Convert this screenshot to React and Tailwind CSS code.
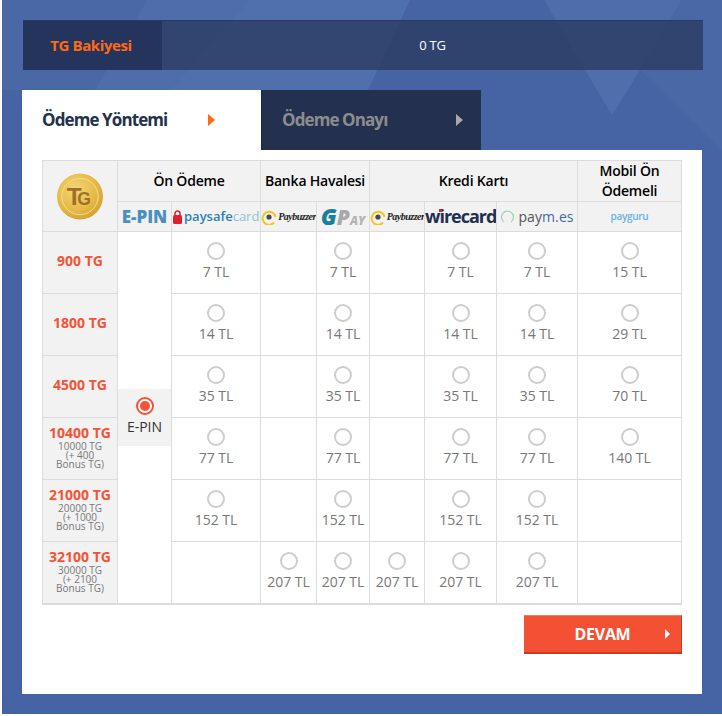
import React from 'react';

const sans = { fontFamily: '"Open Sans", sans-serif' };

const rows = [
  { tg: '900 TG', prices: ['7 TL', '', '7 TL', '', '7 TL', '7 TL', '15 TL'] },
  { tg: '1800 TG', prices: ['14 TL', '', '14 TL', '', '14 TL', '14 TL', '29 TL'] },
  { tg: '4500 TG', prices: ['35 TL', '', '35 TL', '', '35 TL', '35 TL', '70 TL'] },
  { tg: '10400 TG', base: '10000 TG', bonus: '(+ 400', prices: ['77 TL', '', '77 TL', '', '77 TL', '77 TL', '140 TL'] },
  { tg: '21000 TG', base: '20000 TG', bonus: '(+ 1000', prices: ['152 TL', '', '152 TL', '', '152 TL', '152 TL', ''] },
  { tg: '32100 TG', base: '30000 TG', bonus: '(+ 2100', prices: ['', '207 TL', '207 TL', '207 TL', '207 TL', '207 TL', ''] },
];

const Coin = () => (
  <svg width="48" height="47" viewBox="0 0 48 48">
    <defs>
      <radialGradient id="coin" cx="0.4" cy="0.35" r="0.75">
        <stop offset="0" stopColor="#f3d678" />
        <stop offset="0.6" stopColor="#e6b947" />
        <stop offset="1" stopColor="#cf9a2a" />
      </radialGradient>
    </defs>
    <circle cx="24" cy="24" r="23.5" fill="url(#coin)" />
    <circle cx="24" cy="24" r="18.5" fill="none" stroke="#f5dc8c" strokeWidth="1" />
    <text x="18" y="33" textAnchor="middle" fontSize="25" fontWeight="700" fill="#9f7024" fontFamily="Liberation Sans">T</text>
    <text x="28" y="33" textAnchor="middle" fontSize="18" fontWeight="700" fill="#9f7024" fontFamily="Liberation Sans">G</text>
  </svg>
);

const Radio = () => (
  <span className="mx-auto block h-[18px] w-[18px] rounded-full border-2 border-[#cdcdcd] bg-white" />
);

const Price = ({ value }) => (
  <td className="border border-[#dcdcdc] p-0 text-center align-top">
    {value && (
      <div className="pt-[10px]">
        <Radio />
        <div className="mt-[2px] text-[14px] leading-[20px] text-[#777]">{value}</div>
      </div>
    )}
  </td>
);

const Paybyme = () => (
  <div className="flex items-center justify-center gap-[1px]">
    <svg className="shrink-0" width="16" height="16" viewBox="0 0 16 16">
      <path d="M13 13.5 A6.5 6.5 0 1 1 14.5 8" fill="none" stroke="#f2c81e" strokeWidth="2" />
      <circle cx="8" cy="8" r="2.6" fill="#4a4a4a" />
    </svg>
    <span className="text-[10px] font-bold italic tracking-[-0.5px] text-[#222]" style={{ fontFamily: '"Liberation Serif", serif' }}>Paybuzzer</span>
  </div>
);

export default function App() {
  return (
    <div className="h-[716px] w-[722px] overflow-hidden bg-white pl-[2px]" style={sans}>
      <div className="relative h-[714px] w-[720px] bg-[#4664a4]">
        <svg className="absolute left-0 top-0" width="720" height="714" viewBox="2 0 720 714">
          <polygon points="0,0 147,0 95,90 0,90" fill="#4a68a6" />
          <polygon points="147,0 249,0 170,90 95,90" fill="#4f6dab" />
          <polygon points="249,0 410,0 368,90 170,90" fill="#506fad" />
          <polygon points="544,0 682,0 640,70 585,70" fill="#4f6dab" />
          <polygon points="682,0 722,0 722,150 640,70" fill="#4a68a6" />
          <polygon points="585,70 640,70 612,115" fill="#506eac" />
        </svg>

        <div className="relative px-[20px] pt-[20px]">
          <div className="ml-[1px] flex h-[50px] w-[680px] items-center border-t border-[#2a3a63] bg-[#273559]/70">
            <div className="flex h-full w-[139px] items-center justify-center bg-[#24345c] pr-[3px] text-[15px] font-bold tracking-[-0.4px] text-[#ff6a13]">TG Bakiyesi</div>
            <div className="flex-1 text-center text-[13px] tracking-[-0.2px] text-white">0 TG</div>
          </div>

          <div className="mt-[20px] flex h-[60px] w-[459px]">
            <div className="relative flex w-[239px] items-center bg-white pl-[20px] text-[17px] font-bold tracking-[-0.9px] text-[#23314f]">
              Ödeme Yöntemi
              <span className="absolute left-[186px] top-[24px] h-0 w-0 border-y-[6px] border-l-[7px] border-y-transparent border-l-[#ff6a13]" />
            </div>
            <div className="relative flex w-[220px] items-center border-l border-[#1a2540] bg-[#233050] pl-[20px] text-[17px] font-bold tracking-[-0.9px] text-[#8c8c8c]">
              Ödeme Onayı
              <span className="absolute left-[194px] top-[24px] h-0 w-0 border-y-[6px] border-l-[7px] border-y-transparent border-l-[#a9a9a9]" />
            </div>
          </div>

          <div className="h-[544px] w-[680px] bg-white px-[20px] pt-[10px]">
            <table className="w-[639px] table-fixed border-collapse border-b-2 border-[#dcdcdc]">
              <colgroup>
                <col className="w-[75px]" />
                <col className="w-[54px]" />
                <col className="w-[89px]" />
                <col className="w-[56px]" />
                <col className="w-[53px]" />
                <col className="w-[55px]" />
                <col className="w-[72px]" />
                <col className="w-[81px]" />
                <col className="w-[104px]" />
              </colgroup>
              <thead>
                <tr className="h-[40px] bg-[#f2f2f2] text-[14px] leading-[20px] tracking-[-0.2px] text-black">
                  <th rowSpan={2} className="border border-[#dcdcdc] p-0"><div className="flex justify-center"><Coin /></div></th>
                  <th colSpan={2} className="border border-[#dcdcdc] p-0 font-semibold">Ön Ödeme</th>
                  <th colSpan={2} className="border border-[#dcdcdc] p-0 font-semibold">Banka Havalesi</th>
                  <th colSpan={3} className="border border-[#dcdcdc] p-0 font-semibold">Kredi Kartı</th>
                  <th className="border border-[#dcdcdc] p-0 font-semibold">Mobil Ön<br />Ödemeli</th>
                </tr>
                <tr className="h-[30px] bg-[#f2f2f2]">
                  <th className="overflow-hidden border border-[#dcdcdc] p-0 text-[17px] font-extrabold text-[#4b8fc0]">E-PIN</th>
                  <th className="overflow-hidden border border-[#dcdcdc] p-0">
                    <div className="flex items-center gap-[2px] whitespace-nowrap pl-[1px] text-[13px] font-semibold text-[#2c7fb8]">
                      <svg className="shrink-0" width="9" height="14" viewBox="0 0 9 14">
                        <path d="M2 6V3.5a2.5 2.5 0 0 1 5 0V6" fill="none" stroke="#d8232f" strokeWidth="1.5" />
                        <rect x="0" y="5" width="9" height="9" rx="1.5" fill="#d8232f" />
                      </svg>
                      <span>paysafe<span className="font-normal text-[#8fc1df]">card</span></span>
                    </div>
                  </th>
                  <th className="overflow-hidden border border-[#dcdcdc] p-0"><Paybyme /></th>
                  <th className="overflow-hidden border border-[#dcdcdc] p-0 whitespace-nowrap font-extrabold italic leading-none">
                    <span className="text-[23px] text-[#1b7f9c]">G</span>
                    <span className="text-[21px] text-[#a8a8a8]">P</span>
                    <span className="text-[12px] text-[#b4b4b4]">AY</span>
                  </th>
                  <th className="overflow-hidden border border-[#dcdcdc] p-0"><Paybyme /></th>
                  <th className="overflow-hidden border border-[#dcdcdc] p-0 text-[18px] font-bold tracking-[-1px] text-[#1e2f52]">
                    <span className="relative">
                      wirecard
                      <span className="absolute left-[14px] top-[5px] h-[3px] w-[3px] bg-[#e2231a]" />
                    </span>
                  </th>
                  <th className="overflow-hidden border border-[#dcdcdc] p-0">
                    <div className="relative flex items-center justify-center gap-[3px] text-[14px] font-normal tracking-[0.1px] text-[#555]">
                      <svg className="shrink-0" width="15" height="15" viewBox="0 0 15 15">
                        <path d="M4 13 A6 6 0 1 1 11 13" fill="none" stroke="#9fd3b5" strokeWidth="1.3" />
                      </svg>
                      <span>pay<span className="text-[#3f6aa8]">m.es</span></span>
                    </div>
                  </th>
                  <th className="border border-[#dcdcdc] p-0 text-[10px] font-semibold tracking-[-0.3px] text-[#66b2e8]">payguru</th>
                </tr>
              </thead>
              <tbody>
                {rows.map((row, i) => (
                  <tr key={row.tg} className="h-[62px]">
                    <td className="border border-[#dcdcdc] bg-[#f2f2f2] p-0 text-center">
                      <div className="pb-[3px]">
                        <div className="text-[14px] font-bold leading-[16px] text-[#f55236]">{row.tg}</div>
                        {row.base && (
                          <div className="mt-[1px] text-[10px] leading-[9px] text-[#777]">
                            {row.base}<br />{row.bonus}<br />Bonus TG)
                          </div>
                        )}
                      </div>
                    </td>
                    {i === 0 && (
                      <td rowSpan={6} className="border border-[#dcdcdc] p-0 align-middle">
                        <div className="flex h-[57px] flex-col items-center bg-[#f2f2f2] pt-[8px]">
                          <span className="flex h-[18px] w-[18px] items-center justify-center rounded-full border-2 border-[#f55236] bg-white">
                            <span className="h-[10px] w-[10px] rounded-full bg-[#f55236]" />
                          </span>
                          <span className="mt-[2px] text-[14px] leading-[20px] text-[#333]">E-PIN</span>
                        </div>
                      </td>
                    )}
                    {row.prices.map((p, j) => <Price key={j} value={p} />)}
                  </tr>
                ))}
              </tbody>
            </table>

            <div className="mt-[10px] flex justify-end">
              <button className="relative h-[39px] w-[158px] border-t border-b-2 border-r border-t-[#f77a60] border-b-[#c43c22] border-r-[#c43c22] bg-[#f45033] text-[16px] font-bold tracking-[-0.3px] text-white">
                DEVAM
                <span className="absolute left-[141px] top-[13px] h-0 w-0 border-y-[5px] border-l-[5px] border-y-transparent border-l-white" />
              </button>
            </div>
          </div>
        </div>
      </div>
    </div>
  );
}
